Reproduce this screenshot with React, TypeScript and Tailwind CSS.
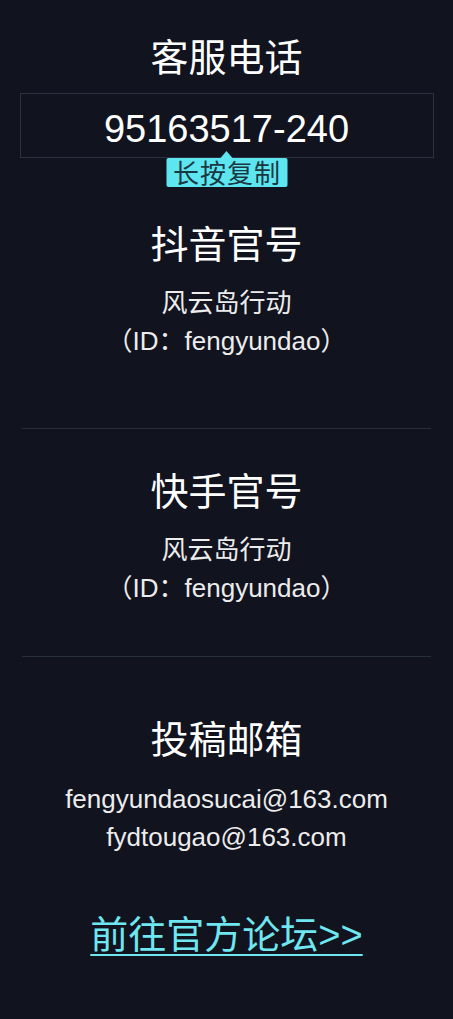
import React from "react";

const font = "font-['Liberation_Sans','Noto_Sans_CJK_SC',sans-serif]";

function Sub({ lines }: { lines: string[] }) {
  return (
    <div className="mt-[16px] flex flex-col items-center text-[26px] leading-[38px] text-[#ececec]">
      {lines.map((l) => (
        <div key={l}>{l}</div>
      ))}
    </div>
  );
}

export default function App() {
  return (
    <div className={`min-h-[1019px] w-full bg-[#11131f] flex flex-col items-center text-white ${font}`}>
      <h2 className="mt-[35px] text-[38px] leading-[46px]">客服电话</h2>
      <div className="relative mt-[12px] w-[414px] h-[65px] border border-[#283240] flex items-center justify-center pt-[7px]">
        <span className="text-[38px] leading-none">95163517-240</span>
        <div className="absolute left-1/2 top-full -translate-x-1/2 flex flex-col items-center">
          <div className="w-0 h-0 border-l-[6px] border-r-[6px] border-b-[7px] border-l-transparent border-r-transparent border-b-[#5de6ef] -mt-[6px]" />
          <div className="bg-[#5de6ef] rounded-[2px] pl-[7px] pr-[6px] h-[29px] pt-[2px] flex items-center text-[26px] leading-none tracking-[1px] text-[#1a3843] whitespace-nowrap">
            长按复制
          </div>
        </div>
      </div>

      <h2 className="mt-[64px] text-[38px] leading-[46px]">抖音官号</h2>
      <Sub lines={["风云岛行动", "（ID：fengyundao）"]} />
      <div className="mt-[68px] w-[409px] h-px bg-[#262e3b]" />

      <h2 className="mt-[40px] text-[38px] leading-[46px]">快手官号</h2>
      <Sub lines={["风云岛行动", "（ID：fengyundao）"]} />
      <div className="mt-[49px] w-[409px] h-px bg-[#262e3b]" />

      <h2 className="mt-[60px] text-[38px] leading-[46px]">投稿邮箱</h2>
      <div className="mt-[17px] flex flex-col items-center text-[26px] leading-[38px] text-[#ececec]">
        <div>fengyundaosucai@163.com</div>
        <div>fydtougao@163.com</div>
      </div>

      <a className="mt-[56px] text-[38px] leading-[46px] text-[#6fe6f0] underline underline-offset-[6px] decoration-[2px]">
        前往官方论坛&gt;&gt;
      </a>
    </div>
  );
}
